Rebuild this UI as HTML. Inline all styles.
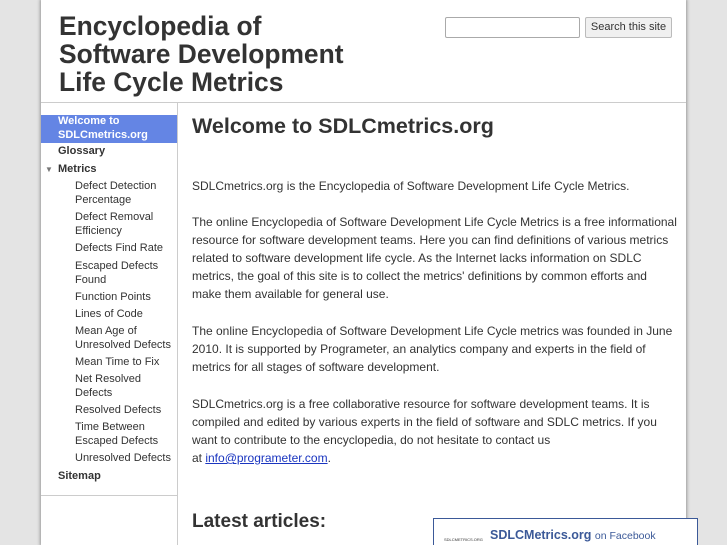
<!DOCTYPE html>
<html><head><style>
html,body{margin:0;width:727px;height:545px;overflow:hidden}
body{background:#e4e4e4;font-family:"Liberation Sans",sans-serif;position:relative}
#wrap{position:absolute;left:41px;top:0;width:645px;height:545px;background:#fff;box-shadow:0 0 3px 1px #999}
h1{position:absolute;left:18px;top:12px;margin:0;font-size:26.4px;line-height:28px;color:#333;font-weight:bold}
#search{position:absolute;left:404px;top:17px}
#search input{position:absolute;left:0;top:0;width:133px;height:19px;border:1px solid #aaa;border-radius:2px;padding:0;margin:0}
#search .b{position:absolute;left:140px;top:0;width:85px;height:19px;border:1px solid #bbb;background:#f0f0f0;font-size:11px;color:#333;text-align:center;line-height:19px;border-radius:2px}
#hline{position:absolute;left:0;top:102px;width:645px;height:1px;background:#ccc}
#side{position:absolute;left:0;top:103px;width:136px;height:392px;border-right:1px solid #ccc;border-bottom:1px solid #ccc}
#sidel{position:absolute;left:136px;top:495px;width:1px;height:50px;background:#ccc}
.it{position:absolute;font-size:11px;line-height:13.5px;color:#333}
.b1{font-weight:bold}
.sel{position:absolute;left:0;top:12px;width:136px;height:28px;background:#6485e4}
#main{position:absolute;left:151px;top:0}
h2{position:absolute;left:0;top:114px;margin:0;font-size:21.5px;color:#333;white-space:nowrap}
p{position:absolute;left:0;margin:0;white-space:nowrap;font-size:12px;line-height:18px;color:#333}
a{color:#1a35c0}
h3{position:absolute;left:0;top:511px;margin:0;font-size:19px;color:#333;white-space:nowrap}
#fb{position:absolute;left:433px;top:518px;width:263px;height:26px;border:1px solid #3b5998;border-bottom:none;background:#fff;overflow:hidden}
</style></head><body>
<div id="wrap">
<h1>Encyclopedia of<br>Software Development<br>Life Cycle Metrics</h1>
<div id="search"><input><div class="b">Search this site</div></div>
<div id="hline"></div>
<div id="side">
<div class="sel"></div>
<div class="it b1" style="left:17px;top:12px;color:#fff">Welcome to<br>SDLCmetrics.org</div>
<div class="it b1" style="left:17px;top:42px">Glossary</div>
<div class="it" style="left:4px;top:60px;color:#777;font-size:8px">▼</div>
<div class="it b1" style="left:17px;top:60px">Metrics</div>
<div class="it" style="left:34px;top:77px">Defect Detection<br>Percentage</div>
<div class="it" style="left:34px;top:108px">Defect Removal<br>Efficiency</div>
<div class="it" style="left:34px;top:139px">Defects Find Rate</div>
<div class="it" style="left:34px;top:157px">Escaped Defects<br>Found</div>
<div class="it" style="left:34px;top:188px">Function Points</div>
<div class="it" style="left:34px;top:205px">Lines of Code</div>
<div class="it" style="left:34px;top:222px">Mean Age of<br>Unresolved Defects</div>
<div class="it" style="left:34px;top:253px">Mean Time to Fix</div>
<div class="it" style="left:34px;top:270px">Net Resolved<br>Defects</div>
<div class="it" style="left:34px;top:301px">Resolved Defects</div>
<div class="it" style="left:34px;top:318px">Time Between<br>Escaped Defects</div>
<div class="it" style="left:34px;top:349px">Unresolved Defects</div>
<div class="it b1" style="left:17px;top:367px">Sitemap</div>
</div>
<div id="sidel"></div>
<div id="main">
<h2>Welcome to SDLCmetrics.org</h2>
<p style="top:177px">SDLCmetrics.org is the Encyclopedia of Software Development Life Cycle Metrics.</p>
<p style="top:213px">The online Encyclopedia of Software Development Life Cycle Metrics is a free informational<br>resource for software development teams. Here you can find definitions of various metrics<br>related to software development life cycle. As the Internet lacks information on SDLC<br>metrics, the goal of this site is to collect the metrics' definitions by common efforts and<br>make them available for general use.</p>
<p style="top:322px">The online Encyclopedia of Software Development Life Cycle metrics was founded in June<br>2010. It is supported by Programeter, an analytics company and experts in the field of<br>metrics for all stages of software development.</p>
<p style="top:395px">SDLCmetrics.org is a free collaborative resource for software development teams. It is<br>compiled and edited by various experts in the field of software and SDLC metrics. If you<br>want to contribute to the encyclopedia, do not hesitate to contact us<br>at <a href="#">info@programeter.com</a>.</p>
<h3>Latest articles:</h3>
</div>
</div>
<div id="fb">
<div style="position:absolute;left:10px;top:18px;width:36px;height:8px;font-size:4px;color:#333">SDLCMETRICS.ORG</div>
<div style="position:absolute;left:56px;top:9px;font-size:12.5px;color:#3b5998;white-space:nowrap"><b>SDLCMetrics.org</b> <span style="font-size:10.5px">on Facebook</span></div>
</div>
</body></html>
